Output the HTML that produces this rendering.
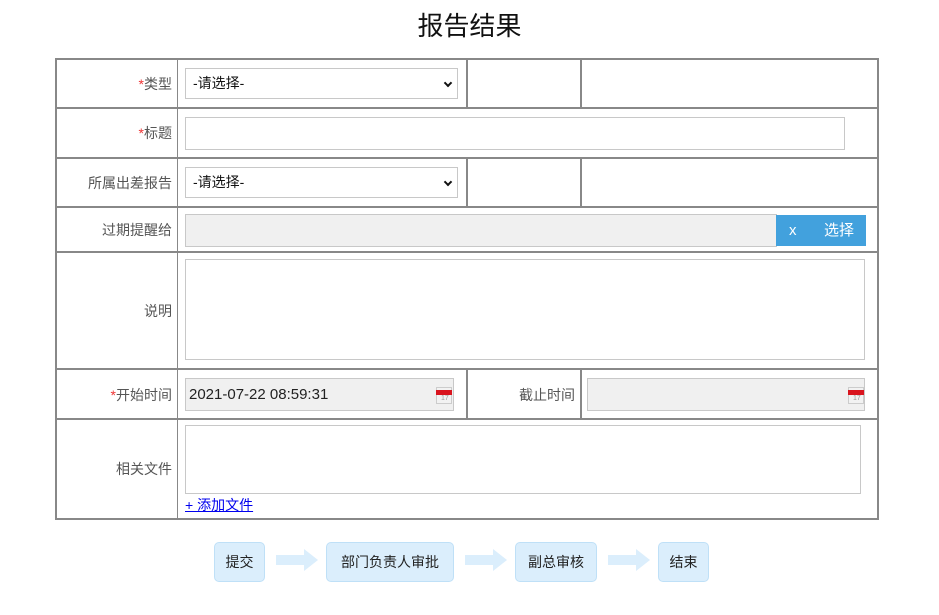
<!DOCTYPE html>
<html><head><meta charset="utf-8"><style>
*{margin:0;padding:0;box-sizing:border-box}
body{width:939px;height:615px;background:#fff;position:relative;font-family:"Liberation Sans","Noto Sans CJK SC",sans-serif;font-size:14px;color:#333;overflow:hidden}
.a{position:absolute}
.h{position:absolute;height:2px;background:#888;left:55px;width:824px}
.v{position:absolute;width:2px;background:#888}
.lb{position:absolute;text-align:right;color:#555;font-size:14px;line-height:20px;left:60px;width:112px}
.r{color:#e33}
.box{position:absolute;border:1px solid #c8c8c8;background:#fff}
.g{background:#f0f0f0}
.sel{font-size:14px;color:#111;line-height:28px;padding-left:7px}
.chev{position:absolute;right:6px;top:11px;width:6px;height:6px;border-right:2px solid #111;border-bottom:2px solid #111;transform:rotate(45deg)}
.cal{position:absolute;width:16px;height:17px;background:#f2f2f2;border:1px solid #ccc}
.cal:before{content:"";position:absolute;left:-1px;top:2px;width:16px;height:5px;background:#d9141e}
.cal:after{content:"17";position:absolute;left:4px;top:7px;font-size:7px;color:#999}
.step{position:absolute;top:542px;height:40px;background:#dbeefc;border:1px solid #bfe0f7;border-radius:5px;font-size:14px;color:#222;line-height:38px;text-align:center}
.arr{position:absolute;top:555px;width:28px;height:10px;background:#dbeefc}
.arr:after{content:"";position:absolute;right:-14px;top:-6px;border-left:14px solid #dbeefc;border-top:11px solid transparent;border-bottom:11px solid transparent}
</style></head><body>
<div class="a" style="left:0;width:939px;top:8px;text-align:center;font-size:26px;color:#111;line-height:36px">报告结果</div>

<div class="h" style="top:58px"></div>
<div class="h" style="top:107px"></div>
<div class="h" style="top:157px"></div>
<div class="h" style="top:206px"></div>
<div class="h" style="top:251px"></div>
<div class="h" style="top:368px"></div>
<div class="h" style="top:418px"></div>
<div class="h" style="top:518px"></div>
<div class="v" style="left:55px;top:58px;height:462px"></div>
<div class="v" style="left:877px;top:58px;height:462px"></div>
<div class="v" style="left:177px;top:58px;height:462px;width:1px"></div>
<div class="v" style="left:466px;top:58px;height:50px"></div>
<div class="v" style="left:580px;top:58px;height:50px"></div>
<div class="v" style="left:466px;top:157px;height:50px"></div>
<div class="v" style="left:580px;top:157px;height:50px"></div>
<div class="v" style="left:466px;top:368px;height:51px"></div>
<div class="v" style="left:580px;top:368px;height:51px"></div>

<div class="lb" style="top:74px"><span class="r">*</span>类型</div>
<div class="box sel" style="left:185px;top:68px;width:273px;height:31px">-请选择-<span class="chev"></span></div>

<div class="lb" style="top:123px"><span class="r">*</span>标题</div>
<div class="box" style="left:185px;top:117px;width:660px;height:33px"></div>

<div class="lb" style="top:173px">所属出差报告</div>
<div class="box sel" style="left:185px;top:167px;width:273px;height:31px">-请选择-<span class="chev"></span></div>

<div class="lb" style="top:220px">过期提醒给</div>
<div class="box g" style="left:185px;top:214px;width:592px;height:33px"></div>
<div class="a" style="left:776px;top:215px;width:90px;height:31px;background:#42a1dd;color:#fff;line-height:31px;font-size:15px"><span style="position:absolute;left:13px">x</span><span style="position:absolute;left:48px">选择</span></div>

<div class="lb" style="top:301px">说明</div>
<div class="box" style="left:185px;top:259px;width:680px;height:101px"></div>

<div class="lb" style="top:385px"><span class="r">*</span>开始时间</div>
<div class="box g" style="left:185px;top:378px;width:269px;height:33px;color:#222;font-size:15px;line-height:31px;padding-left:3px">2021-07-22 08:59:31</div>
<div class="cal" style="left:436px;top:387px"></div>
<div class="a" style="left:470px;width:105px;top:385px;text-align:right;color:#555;line-height:20px">截止时间</div>
<div class="box g" style="left:587px;top:378px;width:278px;height:33px"></div>
<div class="cal" style="left:848px;top:387px"></div>

<div class="lb" style="top:459px">相关文件</div>
<div class="box" style="left:185px;top:425px;width:676px;height:69px"></div>
<div class="a" style="left:185px;top:495px;color:#00e;text-decoration:underline;font-size:14px;line-height:20px">+ 添加文件</div>

<div class="step" style="left:214px;width:51px">提交</div>
<div class="arr" style="left:276px"></div>
<div class="step" style="left:326px;width:128px">部门负责人审批</div>
<div class="arr" style="left:465px"></div>
<div class="step" style="left:515px;width:82px">副总审核</div>
<div class="arr" style="left:608px"></div>
<div class="step" style="left:658px;width:51px">结束</div>
</body></html>
